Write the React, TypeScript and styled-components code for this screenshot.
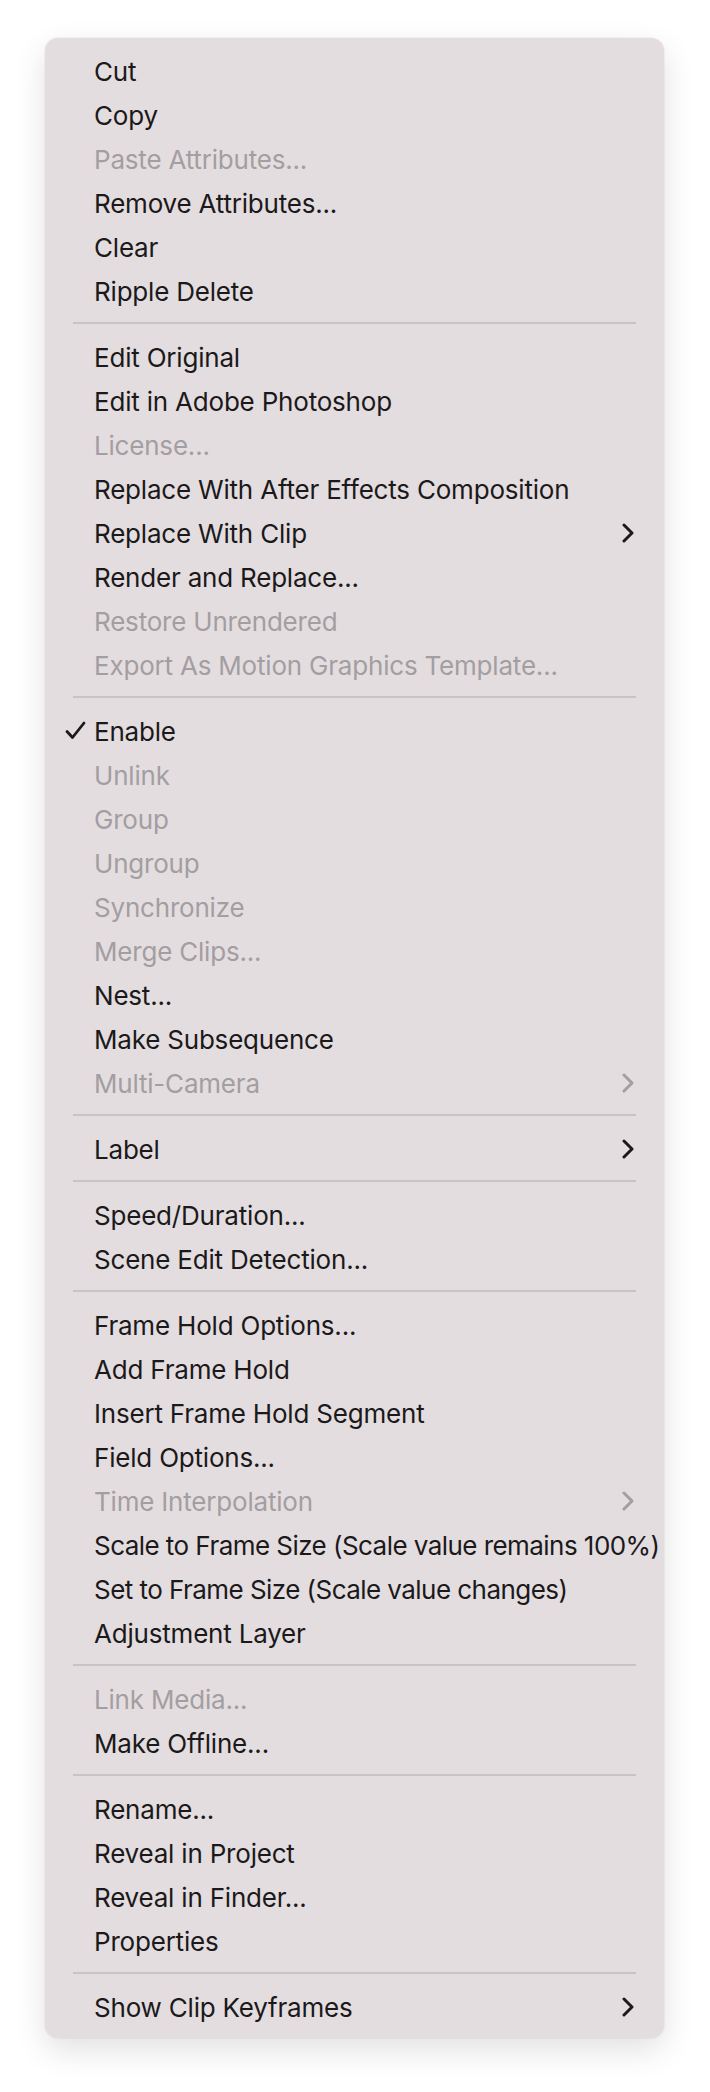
import styled, { createGlobalStyle } from 'styled-components';

const GlobalStyle = createGlobalStyle`
  html, body {
    margin: 0;
    padding: 0;
    background: #ffffff;
  }
  body {
    font-family: Inter, "Noto Sans", "Liberation Sans", sans-serif;
    -webkit-font-smoothing: antialiased;
  }
`;

const Page = styled.div`
  padding: 38px 0 0 45px;
  min-height: 2092px;
  box-sizing: border-box;
`;

const Menu = styled.div`
  width: 619px;
  box-sizing: border-box;
  padding: 11px 0 9px;
  background: #e3dde0;
  border-radius: 13px;
  box-shadow: 0 0 0 1px rgba(0, 0, 0, 0.035), 0 12px 32px rgba(0, 0, 0, 0.12);
`;

const Row = styled.div<{ $disabled?: boolean }>`
  position: relative;
  display: flex;
  align-items: center;
  height: 44px;
  padding: 0 30px 0 49px;
  font-size: 26px;
  letter-spacing: -0.2px;
  white-space: nowrap;
  color: ${({ $disabled }) => ($disabled ? '#a39ea1' : '#1b191a')};
`;

const Label = styled.span`
  flex: 1;
`;

// digits and brackets run wider in Inter than in the system font
const WideLabel = styled(Label)`
  letter-spacing: -0.55px;
`;

const Check = styled.svg`
  position: absolute;
  left: 20px;
  top: 12px;
`;

const Chevron = styled.svg`
  flex: none;
`;

const Separator = styled.div`
  height: 2px;
  margin: 9px 28px 11px;
  background: #c9c3c6;
`;

type Item = {
  label: string;
  disabled?: boolean;
  submenu?: boolean;
  checked?: boolean;
  tight?: boolean;
};

const groups: Item[][] = [
  [
    { label: 'Cut' },
    { label: 'Copy' },
    { label: 'Paste Attributes...', disabled: true },
    { label: 'Remove Attributes...' },
    { label: 'Clear' },
    { label: 'Ripple Delete' },
  ],
  [
    { label: 'Edit Original' },
    { label: 'Edit in Adobe Photoshop' },
    { label: 'License...', disabled: true },
    { label: 'Replace With After Effects Composition' },
    { label: 'Replace With Clip', submenu: true },
    { label: 'Render and Replace...' },
    { label: 'Restore Unrendered', disabled: true },
    { label: 'Export As Motion Graphics Template...', disabled: true },
  ],
  [
    { label: 'Enable', checked: true },
    { label: 'Unlink', disabled: true },
    { label: 'Group', disabled: true },
    { label: 'Ungroup', disabled: true },
    { label: 'Synchronize', disabled: true },
    { label: 'Merge Clips...', disabled: true },
    { label: 'Nest...' },
    { label: 'Make Subsequence' },
    { label: 'Multi-Camera', disabled: true, submenu: true },
  ],
  [{ label: 'Label', submenu: true }],
  [{ label: 'Speed/Duration...' }, { label: 'Scene Edit Detection...' }],
  [
    { label: 'Frame Hold Options...' },
    { label: 'Add Frame Hold' },
    { label: 'Insert Frame Hold Segment' },
    { label: 'Field Options...' },
    { label: 'Time Interpolation', disabled: true, submenu: true },
    { label: 'Scale to Frame Size (Scale value remains 100%)', tight: true },
    { label: 'Set to Frame Size (Scale value changes)', tight: true },
    { label: 'Adjustment Layer' },
  ],
  [{ label: 'Link Media...', disabled: true }, { label: 'Make Offline...' }],
  [
    { label: 'Rename...' },
    { label: 'Reveal in Project' },
    { label: 'Reveal in Finder...' },
    { label: 'Properties' },
  ],
  [{ label: 'Show Clip Keyframes', submenu: true }],
];

function MenuRow({ item }: { item: Item }) {
  const Text = item.tight ? WideLabel : Label;
  return (
    <Row $disabled={item.disabled}>
      {item.checked && (
        <Check width="21" height="19" viewBox="0 0 21 19">
          <path
            d="M2 10.5 L7.5 16.5 L19 2"
            fill="none"
            stroke="currentColor"
            strokeWidth="2.8"
            strokeLinecap="round"
            strokeLinejoin="round"
          />
        </Check>
      )}
      <Text>{item.label}</Text>
      {item.submenu && (
        <Chevron width="12" height="20" viewBox="0 0 12 20">
          <path
            d="M2 2 L10 10 L2 18"
            fill="none"
            stroke="currentColor"
            strokeWidth="3"
            strokeLinecap="round"
            strokeLinejoin="round"
          />
        </Chevron>
      )}
    </Row>
  );
}

export default function App() {
  return (
    <>
      <GlobalStyle />
      <Page>
        <Menu>
          {groups.map((group, gi) => (
            <div key={gi}>
              {gi > 0 && <Separator />}
              {group.map((item) => (
                <MenuRow key={item.label} item={item} />
              ))}
            </div>
          ))}
        </Menu>
      </Page>
    </>
  );
}
